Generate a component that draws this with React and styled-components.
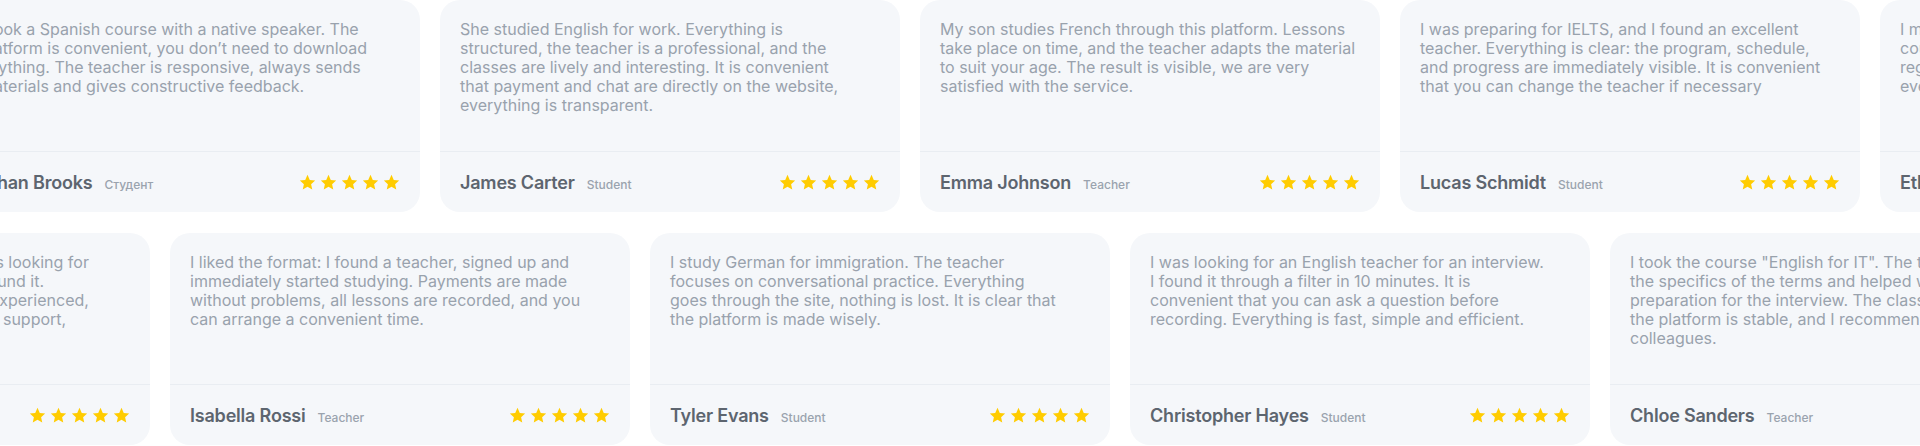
import React from "react";
import styled, { createGlobalStyle } from "styled-components";

const Global = createGlobalStyle`
  html, body { margin: 0; padding: 0; background: #ffffff; }
  body { font-family: "Inter", "Noto Sans", sans-serif; -webkit-font-smoothing: antialiased; }
`;

const Section = styled.section`
  width: 1920px;
  height: 446px;
  overflow: hidden;
  display: flex;
  flex-direction: column;
  gap: 21px;
  background: #ffffff;
`;

const Track = styled.div`
  display: flex;
  gap: 20px;
  width: max-content;
  transform: translateX(${(p) => p.$offset}px);
`;

const Card = styled.article`
  flex: 0 0 460px;
  width: 460px;
  height: 212px;
  box-sizing: border-box;
  background: #f5f7fa;
  border-radius: 20px;
  display: flex;
  flex-direction: column;
`;

const Body = styled.div`
  flex: 1;
  padding: 20px 20px 0;
  font-size: 16px;
  line-height: 19px;
  color: #99a2ad;
  font-weight: 400;
`;

const Line = styled.span`
  display: block;
  white-space: nowrap;
`;

const Footer = styled.footer`
  height: 61px;
  box-sizing: border-box;
  border-top: 1px solid #e9edf2;
  padding: 0 20px;
  display: flex;
  align-items: center;
  justify-content: space-between;
`;

const Author = styled.div`
  display: flex;
  align-items: baseline;
  gap: 12px;
`;

const Name = styled.span`
  font-size: 18px;
  font-weight: 600;
  color: #5d656f;
  letter-spacing: -0.2px;
`;

const Role = styled.span`
  font-size: 12px;
  font-weight: 500;
  color: #9aa3ae;
`;

const Stars = styled.div`
  display: flex;
  gap: 4px;
`;

const Star = () => (
  <svg width="17" height="17" viewBox="0 0 24 24" aria-hidden="true">
    <path
      d="M12 1.2l3.2 7.1 7.6.8-5.7 5.2 1.6 7.6L12 18l-6.7 3.9 1.6-7.6L1.2 9.1l7.6-.8z"
      fill="#ffcc00"
    />
  </svg>
);

const row1 = [
  {
    lines: [
      "I took a Spanish course with a native speaker. The",
      "platform is convenient, you don’t need to download",
      "anything. The teacher is responsive, always sends",
      "materials and gives constructive feedback.",
    ],
    name: "Ethan Brooks",
    role: "Студент",
  },
  {
    lines: [
      "She studied English for work. Everything is",
      "structured, the teacher is a professional, and the",
      "classes are lively and interesting. It is convenient",
      "that payment and chat are directly on the website,",
      "everything is transparent.",
    ],
    name: "James Carter",
    role: "Student",
  },
  {
    lines: [
      "My son studies French through this platform. Lessons",
      "take place on time, and the teacher adapts the material",
      "to suit your age. The result is visible, we are very",
      "satisfied with the service.",
    ],
    name: "Emma Johnson",
    role: "Teacher",
  },
  {
    lines: [
      "I was preparing for IELTS, and I found an excellent",
      "teacher. Everything is clear: the program, schedule,",
      "and progress are immediately visible. It is convenient",
      "that you can change the teacher if necessary",
    ],
    name: "Lucas Schmidt",
    role: "Student",
  },
  {
    lines: [
      "I moved to Canada and needed conversational English.",
      "couldn’t find a teacher for a long time. Lessons are",
      "regular, the teacher is attentive and supportive, and",
      "everything is convenient.",
    ],
    name: "Ethan Walker",
    role: "Student",
  },
];

const row2 = [
  {
    lines: [
      "My colleague advised this site as I was looking for",
      "an Italian tutor for the evening and I found it.",
      "The teacher is patient, attentive, and experienced,",
      "and when problems arise, there is fast support,",
    ],
    name: "Olivia Bennett",
    role: "Student",
  },
  {
    lines: [
      "I liked the format: I found a teacher, signed up and",
      "immediately started studying. Payments are made",
      "without problems, all lessons are recorded, and you",
      "can arrange a convenient time.",
    ],
    name: "Isabella Rossi",
    role: "Teacher",
  },
  {
    lines: [
      "I study German for immigration. The teacher",
      "focuses on conversational practice. Everything",
      "goes through the site, nothing is lost. It is clear that",
      "the platform is made wisely.",
    ],
    name: "Tyler Evans",
    role: "Student",
  },
  {
    lines: [
      "I was looking for an English teacher for an interview.",
      "I found it through a filter in 10 minutes. It is",
      "convenient that you can ask a question before",
      "recording. Everything is fast, simple and efficient.",
    ],
    name: "Christopher Hayes",
    role: "Student",
  },
  {
    lines: [
      "I took the course \"English for IT\". The teacher explained",
      "the specifics of the terms and helped with",
      "preparation for the interview. The classes are useful,",
      "the platform is stable, and I recommend it to my",
      "colleagues.",
    ],
    name: "Chloe Sanders",
    role: "Teacher",
  },
];

const Review = ({ item }) => (
  <Card>
    <Body>
      {item.lines.map((l, i) => (
        <Line key={i}>{l}</Line>
      ))}
    </Body>
    <Footer>
      <Author>
        <Name>{item.name}</Name>
        <Role>{item.role}</Role>
      </Author>
      <Stars>
        {[0, 1, 2, 3, 4].map((i) => (
          <Star key={i} />
        ))}
      </Stars>
    </Footer>
  </Card>
);

export default function App() {
  return (
    <>
      <Global />
      <Section>
        <Track $offset={-40}>
          {row1.map((r, i) => (
            <Review key={i} item={r} />
          ))}
        </Track>
        <Track $offset={-310}>
          {row2.map((r, i) => (
            <Review key={i} item={r} />
          ))}
        </Track>
      </Section>
    </>
  );
}
